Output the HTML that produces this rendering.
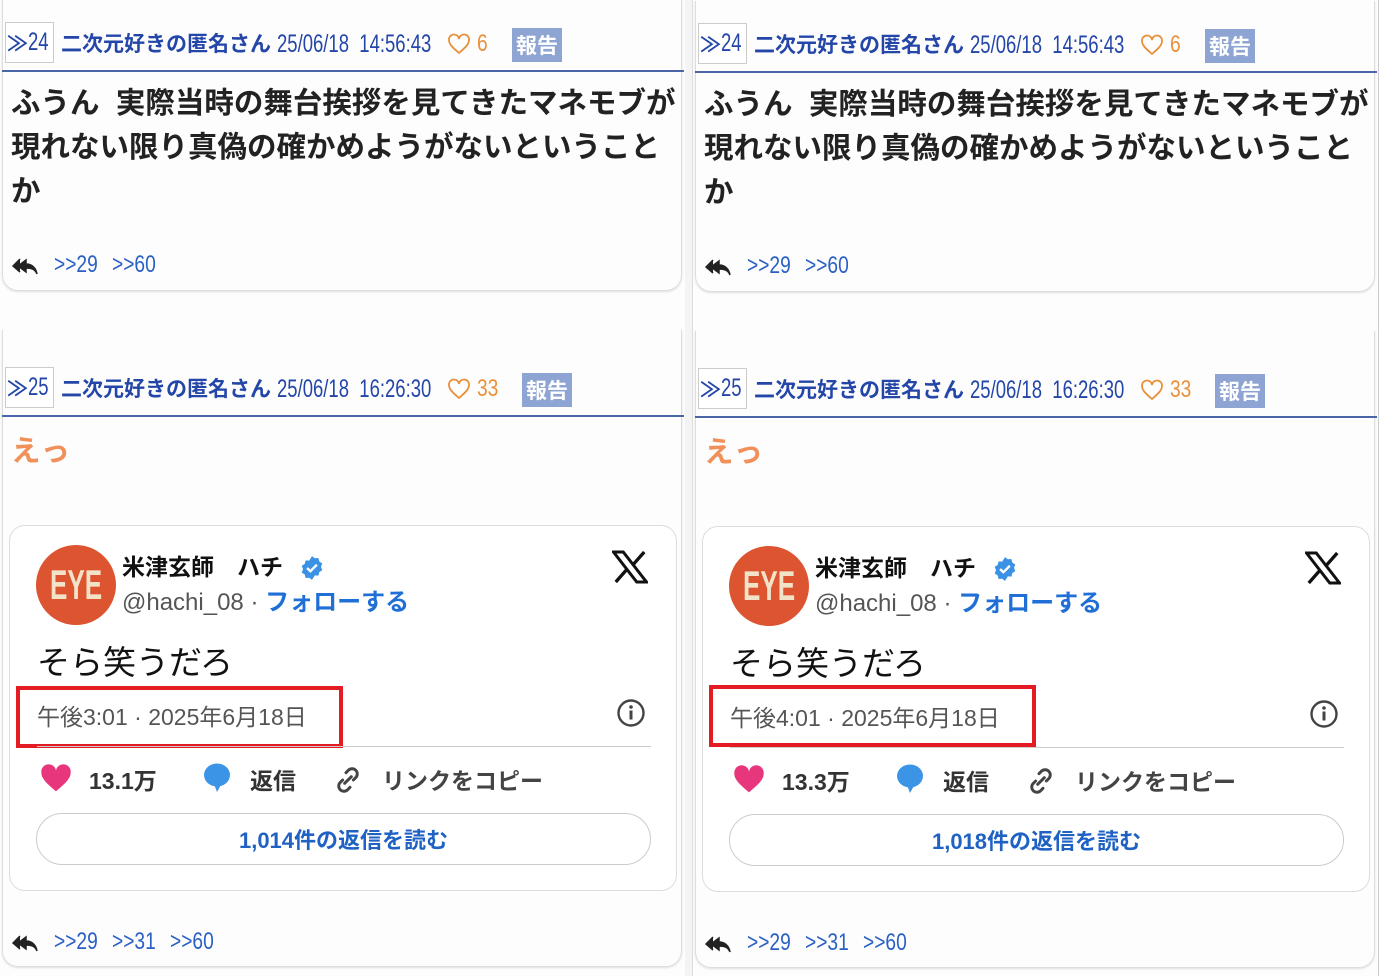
<!DOCTYPE html>
<html><head><meta charset="utf-8">
<style>
*{margin:0;padding:0;box-sizing:border-box}
body{width:1385px;height:976px;background:#fff;position:relative;overflow:hidden;font-family:"Liberation Sans","Noto Sans CJK JP",sans-serif}
.p{position:absolute;top:0;width:685px;height:976px;background:#fdfdfd}
.p>*{position:absolute}
.card{border:1px solid #ddd;border-top:none;border-radius:0 0 16px 16px;box-shadow:0 1px 2px rgba(0,0,0,.12);left:2px;width:680px}
.hdr{font-size:21px;color:#2346a8;white-space:nowrap;font-weight:600;line-height:1}
.num{border:1px solid #ccc;width:49px;height:41px;display:flex;align-items:center;justify-content:center;color:#2346a8;font-size:21px;background:#fff;font-weight:600}
.cond{display:inline-block;transform:scaleX(.8);transform-origin:left center}
.d{display:inline-block;font-size:25px;transform:scaleX(.74);transform-origin:left center;font-weight:400;vertical-align:-1px}
.line{height:2px;background:#4a66a8;left:2px;width:682px}
.body{font-size:29.5px;font-weight:700;color:#222;line-height:44px;left:11px;width:668px}
.rep{font-size:24px;color:#2a5fc4;white-space:nowrap;line-height:1}
.hou{background:#8ea4d2;color:#fff;font-size:21px;font-weight:700;width:50px;height:34px;display:flex;align-items:center;justify-content:center}
.like{color:#e8903a;font-size:24px;white-space:nowrap;line-height:1;display:flex;align-items:center;gap:6px}
.tw{border:1px solid #ddd;border-radius:16px;left:9px;width:668px;height:366px;background:#fff}
.tw>*{position:absolute}
</style></head><body>
<div style="position:absolute;left:684px;top:0;width:9px;height:976px;background:#f4f4f4;border-left:1px solid #ccc;border-right:1px solid #ddd"></div>
<div style="position:absolute;left:1378px;top:0;width:7px;height:976px;background:#fff;border-left:1px solid #ccc"></div>

<!-- LEFT PANEL -->
<div class="p" style="left:0">
 <div class="card" style="top:0;height:291px"></div>
 <div class="num" style="left:5px;top:22px"><span>≫</span><span class="d" style="width:24px">24</span></div>
 <div class="hdr" style="left:61px;top:32px">二次元好きの匿名さん <span class="d">25/06/18&nbsp; 14:56:43</span></div>
 <div class="like" style="left:447px;top:32px"><svg width="24" height="24" viewBox="0 0 24 22"><path d="M12 20C5 14 2 11 2 7a5 5 0 0 1 10-1 5 5 0 0 1 10 1c0 4-3 7-10 13z" fill="none" stroke="#e8903a" stroke-width="1.8"/></svg><span class="cond">6</span></div>
 <div class="hou" style="left:512px;top:28px">報告</div>
 <div class="line" style="top:70px"></div>
 <div class="body" style="top:82px">ふうん&nbsp; 実際当時の舞台挨拶を見てきたマネモブが現れない限り真偽の確かめようがないということか</div>
 <svg style="left:12px;top:257px" width="26" height="18" viewBox="0 0 26 18"><path d="M8 2L1 9l7 6M14 3L6 9l8 6V11c5 0 9 1 11 6-1-6-5-10-11-10z" fill="#222" stroke="#222" stroke-width="1.5"/></svg>
 <div class="rep" style="left:54px;top:253px"><span class="cond">&gt;&gt;29</span></div>
 <div class="rep" style="left:112px;top:253px"><span class="cond">&gt;&gt;60</span></div>

 <div class="card" style="top:330px;height:637px"></div>
 <div class="num" style="left:5px;top:367px"><span>≫</span><span class="d" style="width:24px">25</span></div>
 <div class="hdr" style="left:61px;top:377px">二次元好きの匿名さん <span class="d">25/06/18&nbsp; 16:26:30</span></div>
 <div class="like" style="left:447px;top:377px"><svg width="24" height="24" viewBox="0 0 24 22"><path d="M12 20C5 14 2 11 2 7a5 5 0 0 1 10-1 5 5 0 0 1 10 1c0 4-3 7-10 13z" fill="none" stroke="#e8903a" stroke-width="1.8"/></svg><span class="cond">33</span></div>
 <div class="hou" style="left:522px;top:373px">報告</div>
 <div class="line" style="top:415px"></div>
 <div class="body" style="top:430px;color:#f0915c">えっ</div>

 <div class="tw" style="top:525px">
  <div style="left:26px;top:19px;width:80px;height:80px;border-radius:50%;background:#dc5430;color:#f2e2c8;font-size:42px;font-weight:700;display:flex;align-items:center;justify-content:center"><span style="display:inline-block;transform:scaleX(.62)">EYE</span></div>
  <div style="left:112px;top:22px;font-size:23px;font-weight:700;color:#111;white-space:nowrap">米津玄師　ハチ</div>
  <svg style="left:289px;top:29px" width="26" height="26" viewBox="0 0 24 24"><path d="M12 1l2.6 2 3.3-.2.8 3.2 2.8 1.8-1.2 3.1 1.2 3.1-2.8 1.8-.8 3.2-3.3-.2L12 23l-2.6-2-3.3.2-.8-3.2-2.8-1.8 1.2-3.1-1.2-3.1 2.8-1.8.8-3.200 3.3.2z" fill="#3b92e4"/><path d="M7.5 12l3 3 6-6" fill="none" stroke="#fff" stroke-width="2.2"/></svg>
  <div style="left:112px;top:56px;font-size:24px;white-space:nowrap;color:#555"><span>@hachi_08</span> · <span style="color:#1f6fd6;font-weight:700">フォローする</span></div>
  <svg style="left:602px;top:24px" width="36" height="34" viewBox="0 0 24 22"><path d="M1 1h6.5L23 21h-6.5z" fill="none" stroke="#111" stroke-width="2"/><path d="M21.5 1L14 9.5M2.5 21L10 12.5" stroke="#111" stroke-width="2.2"/></svg>
  <div style="left:27px;top:110px;font-size:33px;color:#111;white-space:nowrap">そら笑うだろ</div>
  <div style="left:6px;top:160px;width:327px;height:62px;border:4px solid #e31b23"></div>
  <div style="left:27px;top:172px;font-size:23px;white-space:nowrap;color:#555">午後3:01 · 2025年6月18日</div>
  <svg style="left:606px;top:172px" width="30" height="30" viewBox="0 0 30 30"><circle cx="15" cy="15" r="12.5" fill="none" stroke="#444" stroke-width="2.4"/><rect x="13.5" y="12.5" width="3" height="9" fill="#444"/><circle cx="15" cy="9" r="1.8" fill="#444"/></svg>
  <div style="left:27px;top:220px;width:614px;height:1px;background:#ccc"></div>
  <svg style="left:30px;top:237px" width="32" height="30" viewBox="0 0 24 22"><path d="M12 21C5 15 1 11.5 1 7a5.5 5.5 0 0 1 11-1.5A5.5 5.5 0 0 1 23 7c0 4.5-4 8-11 14z" fill="#e8367c"/></svg>
  <div style="left:79px;top:236px;font-size:23px;font-weight:700;color:#333">13.1万</div>
  <svg style="left:192px;top:236px" width="30" height="32" viewBox="0 0 30 32"><ellipse cx="15" cy="13" rx="13" ry="11.5" fill="#3b94e6"/><path d="M12 22l3 8 5-9z" fill="#3b94e6"/></svg>
  <div style="left:240px;top:236px;font-size:23px;font-weight:700;color:#333">返信</div>
  <svg style="left:322px;top:238px" width="32" height="32" viewBox="0 0 24 24"><path d="M10.5 6.5l2-2a3.9 3.9 0 0 1 5.5 5.5l-2 2M13.5 17.5l-2 2A3.9 3.9 0 0 1 6 14l2-2M9.5 14.5l5-5" fill="none" stroke="#444" stroke-width="2.2" stroke-linecap="round"/></svg>
  <div style="left:372px;top:236px;font-size:23px;font-weight:700;color:#444;white-space:nowrap">リンクをコピー</div>
  <div style="left:26px;top:287px;width:615px;height:52px;border:1px solid #ccc;border-radius:26px;display:flex;align-items:center;justify-content:center;color:#1f62c4;font-size:22px;font-weight:700">1,014件の返信を読む</div>
 </div>
 <svg style="left:12px;top:934px" width="26" height="18" viewBox="0 0 26 18"><path d="M8 2L1 9l7 6M14 3L6 9l8 6V11c5 0 9 1 11 6-1-6-5-10-11-10z" fill="#222" stroke="#222" stroke-width="1.5"/></svg>
 <div class="rep" style="left:54px;top:930px"><span class="cond">&gt;&gt;29</span></div>
 <div class="rep" style="left:112px;top:930px"><span class="cond">&gt;&gt;31</span></div>
 <div class="rep" style="left:170px;top:930px"><span class="cond">&gt;&gt;60</span></div>
</div>

<!-- RIGHT PANEL -->
<div class="p" style="left:693px;top:1px">
 <div class="card" style="top:0;height:291px"></div>
 <div class="num" style="left:5px;top:22px"><span>≫</span><span class="d" style="width:24px">24</span></div>
 <div class="hdr" style="left:61px;top:32px">二次元好きの匿名さん <span class="d">25/06/18&nbsp; 14:56:43</span></div>
 <div class="like" style="left:447px;top:32px"><svg width="24" height="24" viewBox="0 0 24 22"><path d="M12 20C5 14 2 11 2 7a5 5 0 0 1 10-1 5 5 0 0 1 10 1c0 4-3 7-10 13z" fill="none" stroke="#e8903a" stroke-width="1.8"/></svg><span class="cond">6</span></div>
 <div class="hou" style="left:512px;top:28px">報告</div>
 <div class="line" style="top:70px"></div>
 <div class="body" style="top:82px">ふうん&nbsp; 実際当時の舞台挨拶を見てきたマネモブが現れない限り真偽の確かめようがないということか</div>
 <svg style="left:12px;top:257px" width="26" height="18" viewBox="0 0 26 18"><path d="M8 2L1 9l7 6M14 3L6 9l8 6V11c5 0 9 1 11 6-1-6-5-10-11-10z" fill="#222" stroke="#222" stroke-width="1.5"/></svg>
 <div class="rep" style="left:54px;top:253px"><span class="cond">&gt;&gt;29</span></div>
 <div class="rep" style="left:112px;top:253px"><span class="cond">&gt;&gt;60</span></div>

 <div class="card" style="top:330px;height:637px"></div>
 <div class="num" style="left:5px;top:367px"><span>≫</span><span class="d" style="width:24px">25</span></div>
 <div class="hdr" style="left:61px;top:377px">二次元好きの匿名さん <span class="d">25/06/18&nbsp; 16:26:30</span></div>
 <div class="like" style="left:447px;top:377px"><svg width="24" height="24" viewBox="0 0 24 22"><path d="M12 20C5 14 2 11 2 7a5 5 0 0 1 10-1 5 5 0 0 1 10 1c0 4-3 7-10 13z" fill="none" stroke="#e8903a" stroke-width="1.8"/></svg><span class="cond">33</span></div>
 <div class="hou" style="left:522px;top:373px">報告</div>
 <div class="line" style="top:415px"></div>
 <div class="body" style="top:430px;color:#f0915c">えっ</div>

 <div class="tw" style="top:525px">
  <div style="left:26px;top:19px;width:80px;height:80px;border-radius:50%;background:#dc5430;color:#f2e2c8;font-size:42px;font-weight:700;display:flex;align-items:center;justify-content:center"><span style="display:inline-block;transform:scaleX(.62)">EYE</span></div>
  <div style="left:112px;top:22px;font-size:23px;font-weight:700;color:#111;white-space:nowrap">米津玄師　ハチ</div>
  <svg style="left:289px;top:29px" width="26" height="26" viewBox="0 0 24 24"><path d="M12 1l2.6 2 3.3-.2.8 3.2 2.8 1.8-1.2 3.1 1.2 3.1-2.8 1.8-.8 3.2-3.3-.2L12 23l-2.6-2-3.3.2-.8-3.2-2.8-1.8 1.2-3.1-1.2-3.1 2.8-1.8.8-3.2 3.3.2z" fill="#3b92e4"/><path d="M7.5 12l3 3 6-6" fill="none" stroke="#fff" stroke-width="2.2"/></svg>
  <div style="left:112px;top:56px;font-size:24px;white-space:nowrap;color:#555"><span>@hachi_08</span> · <span style="color:#1f6fd6;font-weight:700">フォローする</span></div>
  <svg style="left:602px;top:24px" width="36" height="34" viewBox="0 0 24 22"><path d="M1 1h6.5L23 21h-6.5z" fill="none" stroke="#111" stroke-width="2"/><path d="M21.5 1L14 9.5M2.5 21L10 12.5" stroke="#111" stroke-width="2.2"/></svg>
  <div style="left:27px;top:110px;font-size:33px;color:#111;white-space:nowrap">そら笑うだろ</div>
  <div style="left:6px;top:158px;width:327px;height:62px;border:4px solid #e31b23"></div>
  <div style="left:27px;top:172px;font-size:23px;white-space:nowrap;color:#555">午後4:01 · 2025年6月18日</div>
  <svg style="left:606px;top:172px" width="30" height="30" viewBox="0 0 30 30"><circle cx="15" cy="15" r="12.5" fill="none" stroke="#444" stroke-width="2.4"/><rect x="13.5" y="12.5" width="3" height="9" fill="#444"/><circle cx="15" cy="9" r="1.8" fill="#444"/></svg>
  <div style="left:27px;top:220px;width:614px;height:1px;background:#ccc"></div>
  <svg style="left:30px;top:237px" width="32" height="30" viewBox="0 0 24 22"><path d="M12 21C5 15 1 11.5 1 7a5.5 5.5 0 0 1 11-1.5A5.5 5.5 0 0 1 23 7c0 4.5-4 8-11 14z" fill="#e8367c"/></svg>
  <div style="left:79px;top:236px;font-size:23px;font-weight:700;color:#333">13.3万</div>
  <svg style="left:192px;top:236px" width="30" height="32" viewBox="0 0 30 32"><ellipse cx="15" cy="13" rx="13" ry="11.5" fill="#3b94e6"/><path d="M12 22l3 8 5-9z" fill="#3b94e6"/></svg>
  <div style="left:240px;top:236px;font-size:23px;font-weight:700;color:#333">返信</div>
  <svg style="left:322px;top:238px" width="32" height="32" viewBox="0 0 24 24"><path d="M10.5 6.5l2-2a3.9 3.9 0 0 1 5.5 5.5l-2 2M13.5 17.5l-2 2A3.9 3.9 0 0 1 6 14l2-2M9.5 14.5l5-5" fill="none" stroke="#444" stroke-width="2.2" stroke-linecap="round"/></svg>
  <div style="left:372px;top:236px;font-size:23px;font-weight:700;color:#444;white-space:nowrap">リンクをコピー</div>
  <div style="left:26px;top:287px;width:615px;height:52px;border:1px solid #ccc;border-radius:26px;display:flex;align-items:center;justify-content:center;color:#1f62c4;font-size:22px;font-weight:700">1,018件の返信を読む</div>
 </div>
 <svg style="left:12px;top:934px" width="26" height="18" viewBox="0 0 26 18"><path d="M8 2L1 9l7 6M14 3L6 9l8 6V11c5 0 9 1 11 6-1-6-5-10-11-10z" fill="#222" stroke="#222" stroke-width="1.5"/></svg>
 <div class="rep" style="left:54px;top:930px"><span class="cond">&gt;&gt;29</span></div>
 <div class="rep" style="left:112px;top:930px"><span class="cond">&gt;&gt;31</span></div>
 <div class="rep" style="left:170px;top:930px"><span class="cond">&gt;&gt;60</span></div>
</div>
</body></html>
